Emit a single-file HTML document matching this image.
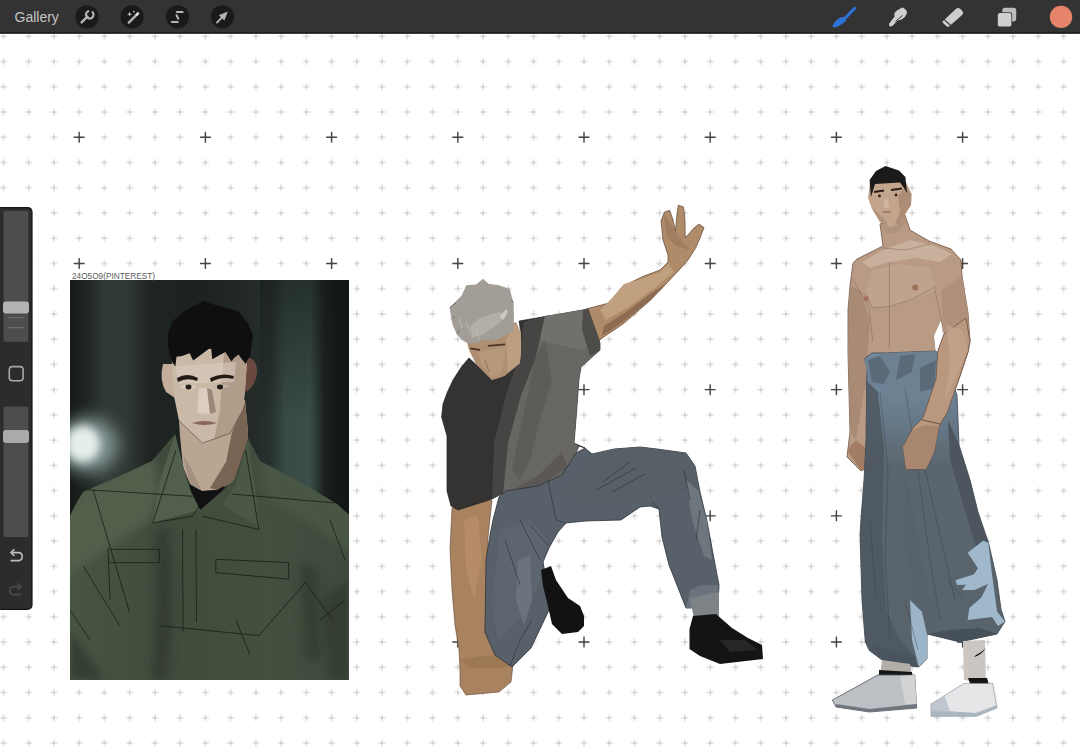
<!DOCTYPE html>
<html><head><meta charset="utf-8">
<style>
html,body{margin:0;padding:0;width:1080px;height:754px;overflow:hidden;background:#ffffff;font-family:"Liberation Sans",sans-serif;}
#root{position:relative;width:1080px;height:754px;overflow:hidden;}
svg{position:absolute;left:0;top:0;}
</style></head><body><div id="root">
<svg width="1080" height="754" viewBox="0 0 1080 754">
<defs>
<pattern id="g" patternUnits="userSpaceOnUse" x="-9.14" y="23.68" width="25.24" height="25.24">
<path d="M9.12 12.62h7M12.62 9.12v7" stroke="#cdcdcd" stroke-width="1"/><rect x="12.12" y="12.12" width="1" height="1" fill="#a8a8a8"/>
</pattern>
<filter id="b2" x="-50%" y="-50%" width="200%" height="200%"><feGaussianBlur stdDeviation="2"/></filter>
<filter id="b4" x="-50%" y="-50%" width="200%" height="200%"><feGaussianBlur stdDeviation="4"/></filter>
<filter id="b8" x="-50%" y="-50%" width="200%" height="200%"><feGaussianBlur stdDeviation="8"/></filter>
<filter id="b1" x="-50%" y="-50%" width="200%" height="200%"><feGaussianBlur stdDeviation="1"/></filter>
<clipPath id="photoclip"><rect x="70" y="280" width="279" height="400"/></clipPath>
</defs>
<rect x="0" y="33" width="1080" height="721" fill="url(#g)"/>
<path d="M73.70 137.26h11M79.20 131.76v11M199.90 137.26h11M205.40 131.76v11M326.10 137.26h11M331.60 131.76v11M452.30 137.26h11M457.80 131.76v11M578.50 137.26h11M584.00 131.76v11M704.70 137.26h11M710.20 131.76v11M830.90 137.26h11M836.40 131.76v11M957.10 137.26h11M962.60 131.76v11M73.70 263.46h11M79.20 257.96v11M199.90 263.46h11M205.40 257.96v11M326.10 263.46h11M331.60 257.96v11M452.30 263.46h11M457.80 257.96v11M578.50 263.46h11M584.00 257.96v11M704.70 263.46h11M710.20 257.96v11M830.90 263.46h11M836.40 257.96v11M957.10 263.46h11M962.60 257.96v11M73.70 389.66h11M79.20 384.16v11M199.90 389.66h11M205.40 384.16v11M326.10 389.66h11M331.60 384.16v11M452.30 389.66h11M457.80 384.16v11M578.50 389.66h11M584.00 384.16v11M704.70 389.66h11M710.20 384.16v11M830.90 389.66h11M836.40 384.16v11M957.10 389.66h11M962.60 384.16v11M73.70 515.86h11M79.20 510.36v11M199.90 515.86h11M205.40 510.36v11M326.10 515.86h11M331.60 510.36v11M452.30 515.86h11M457.80 510.36v11M578.50 515.86h11M584.00 510.36v11M704.70 515.86h11M710.20 510.36v11M830.90 515.86h11M836.40 510.36v11M957.10 515.86h11M962.60 510.36v11M73.70 642.06h11M79.20 636.56v11M199.90 642.06h11M205.40 636.56v11M326.10 642.06h11M331.60 636.56v11M452.30 642.06h11M457.80 636.56v11M578.50 642.06h11M584.00 636.56v11M704.70 642.06h11M710.20 636.56v11M830.90 642.06h11M836.40 636.56v11M957.10 642.06h11M962.60 636.56v11" stroke="#474747" stroke-width="1.4"/>
<g clip-path="url(#photoclip)">
<defs>
<linearGradient id="bgh" gradientUnits="userSpaceOnUse" x1="70" y1="0" x2="349" y2="0">
<stop offset="0" stop-color="#141917"/><stop offset="0.06" stop-color="#1f2624"/><stop offset="0.12" stop-color="#313936"/><stop offset="0.2" stop-color="#313936"/><stop offset="0.28" stop-color="#1f2523"/><stop offset="0.45" stop-color="#1c2220"/><stop offset="0.64" stop-color="#222927"/><stop offset="0.72" stop-color="#283130"/><stop offset="0.77" stop-color="#384a45"/><stop offset="0.86" stop-color="#3b4e49"/><stop offset="0.91" stop-color="#1d2321"/><stop offset="0.95" stop-color="#141817"/><stop offset="1" stop-color="#131716"/>
</linearGradient>
<linearGradient id="bgv" x1="0" y1="0" x2="0" y2="1"><stop offset="0" stop-color="#141917" stop-opacity="0.55"/><stop offset="0.35" stop-color="#141917" stop-opacity="0"/></linearGradient>
<linearGradient id="jk" x1="0" y1="0" x2="1" y2="0"><stop offset="0" stop-color="#495544"/><stop offset="0.35" stop-color="#404b3c"/><stop offset="0.7" stop-color="#434f3f"/><stop offset="1" stop-color="#3f4a3c"/></linearGradient>
</defs>
<rect x="70" y="280" width="279" height="400" fill="url(#bgh)"/>
<rect x="260" y="280" width="70" height="400" fill="url(#bgv)"/>
<ellipse cx="88" cy="445" rx="30" ry="28" fill="#7f928f" filter="url(#b8)"/>
<ellipse cx="83" cy="444" rx="17" ry="18" fill="#e6eeed" filter="url(#b4)"/>
<!-- neck -->
<path d="M179 420L245 400L248 432L248 462L234 482L217 490L202 491L190 484L183 467L180 436Z" fill="#b8a592"/>
<path d="M232 432L245 402L248 432L248 462L234 482L217 490L210 488L226 462Z" fill="#7a6454"/>
<path d="M183 455L192 470L202 491L190 484Z" fill="#9f8b79" opacity="0.8"/>
<!-- ears -->
<path d="M163 364Q159 380 166 392L175 398L174 364Z" fill="#c4ad9a"/>
<path d="M245 357Q258 358 257 373Q255 388 244 393Z" fill="#6a4a3e"/>
<!-- face -->
<path d="M171 350L248 348L245 390L243 410L230 433L202.5 443L179 420.7L174 396Z" fill="#cbb9a7"/>
<path d="M224 352L248 348L245 390L243 410L230 433L214 440L220 410Z" fill="#ad9784" opacity="0.85"/>
<path d="M176 366L236 362L234 382L178 384Z" fill="#d8ccbf" opacity="0.6"/>
<path d="M199 388L207 388L210 414L197 413Z" fill="#ded3c7" opacity="0.8"/>
<path d="M207 388L212 390L216 412L210 414Z" fill="#8f7b6a" opacity="0.8"/>
<path d="M179 420.7L202.5 443L230 433.4L245 405.8" stroke="#3a2e28" stroke-width="0.8" fill="none" opacity="0.6"/>
<!-- brows eyes lips -->
<path d="M177 378Q187 372 198 378L197 381Q187 377 178 382Z" fill="#231a16"/>
<path d="M210 378Q222 372 234 376L233 379Q222 376 211 382Z" fill="#231a16"/>
<path d="M180 387Q188 382 197 387Q188 391 180 387Z" fill="#d9d0c8"/><ellipse cx="188.5" cy="387" rx="3" ry="2.4" fill="#241a16"/>
<path d="M211 387Q220 382 230 386Q220 391 211 387Z" fill="#bfb4aa"/><ellipse cx="220" cy="387" rx="3" ry="2.4" fill="#241a16"/>
<path d="M192 423Q204 419 217 423Q204 427 192 423Z" fill="#8a6559"/>
<!-- hair -->
<path d="M175.3 366.4L171.7 361.6L168.1 347.3L168.1 333L172.9 321L182.4 312.7L194.4 305.5L203.9 300.7L212 304L221.8 306.7L238.5 311.5L248 323.4L252.9 335.3L250.5 354.4L245.7 364L241 358L238.5 354.4L234 358L231.4 361.6L225.4 352L218 356L212.3 359.2L211 347.3L202 354L193.2 360.4L189.6 353.2L182 356L176.5 356.8Z" fill="#0f0f0f"/>
<!-- undershirt -->
<path d="M190 486L202 491L217 490L224 486L220 506L200 510L191 504Z" fill="#111"/>
<!-- jacket -->
<clipPath id="jkclip"><path d="M70 516L76 504L83 492L120 476L152 461L175 434L184 470L191 492L200 510L221 492L234 480L248 438L260 461L300 482L337 504L349 515L349 680L70 680Z"/></clipPath>
<path d="M70 516L76 504L83 492L120 476L152 461L175 434L184 470L191 492L200 510L221 492L234 480L248 438L260 461L300 482L337 504L349 515L349 680L70 680Z" fill="url(#jk)"/>
<g clip-path="url(#jkclip)"><path d="M60 516L76 500L83 488L120 470L152 455L160 490L150 520L120 540L90 560L60 580Z" fill="#525f4c" filter="url(#b4)"/>
<path d="M260 455L300 476L337 498L360 510L360 560L320 530L268 500Z" fill="#4a5645" filter="url(#b4)"/></g>
<path d="M175 434L184 470L191 492L200 510L152 523L160 480Z" fill="#525f4c"/>
<path d="M248 438L260 527L222 505L236 484Z" fill="#4b5845"/>
<path d="M155 530L170 530L172 620L168 680L152 680L156 600Z" fill="#353e31" filter="url(#b4)"/>
<path d="M300 560L318 570L322 660L305 660Z" fill="#363f32" filter="url(#b4)"/>
<path d="M70 630L105 680L70 680Z" fill="#343d30" filter="url(#b4)"/>
<path d="M320 600L349 580L349 680L330 680Z" fill="#353e31" filter="url(#b4)"/>
<g stroke="#172015" stroke-width="0.9" fill="none" opacity="0.9">
<path d="M176 450L152.8 522.9L192.6 516.2L199 506"/>
<path d="M245.6 450L258.9 529.5L202.5 516.2"/>
<path d="M86.5 489.7L192.6 496.3M232 494L335 503"/>
<path d="M182.6 529.5L183 632M195.9 529.5L196.5 622"/>
<path d="M109.7 549.4L159.4 549.4L159.4 562.6L109.7 562.6M108 548L110 600"/>
<path d="M215.8 559.3L288.7 562.6L288.7 579.2L215.8 572.6Z"/>
<path d="M159.4 625.6L258.9 635.6L305.3 582.5"/>
<path d="M83.2 566L119.7 625.6M93.1 489.7L129.6 612.4M236 620L250 655M305.3 582.5L331.8 619M320 620L345 600"/>
<path d="M70 610L90 640M330 520L345 560"/>
</g>
</g>
<text x="72" y="278.6" font-family="Liberation Sans" font-size="9.5" fill="#5a5a5a" textLength="83" lengthAdjust="spacingAndGlyphs">24O5O9(PINTEREST)</text>

<!-- crouching figure -->
<!-- raised arm -->
<path d="M586 309L609 303L623 286L644 276L660 270L668 262L668 255L663 240L661 221L664.5 212L669.7 210.3L673 220L675.5 231L677 214L678.3 205.2L683.4 206.9L685 220L685.2 237.9L694 228L699 224L704 227.6L700 238L695.5 248.3L688 260L681.7 267.2L666 284L650.7 300L623 324L602.4 337.9L592 346L580 330Z" fill="#af8b6a" stroke="#5e4532" stroke-width="0.7"/>
<path d="M600 310L613 297L624 284L644 278L660 272L668 264L674 272L652 290L630 306L606 320Z" fill="#c0a07f"/>
<path d="M602 336L623 322L650 300L666 284L650 294L626 312L604 326Z" fill="#8d6b50"/>
<path d="M664 214L672 226L680 238L690 250L676 246L666 236Z" fill="#97765a" opacity="0.6"/>
<!-- left hanging arm -->
<path d="M452 508L450 549L452 590L455 625L459 650L460 670L460 686L466 695L499 692L511 682L513 665L495 655L485 632L487 570L488 537L492 500Z" fill="#a98260" stroke="#5e4532" stroke-width="0.6"/>
<path d="M464 520L478 515L482 560L474 600L466 570Z" fill="#b98f6a" opacity="0.8"/>
<path d="M460 660L480 656L495 655L513 665L500 668L470 668Z" fill="#96714f" opacity="0.6"/>
<!-- shirt -->
<path d="M469 358L462 366L453 380L447 393L443 404L441.6 417L447 436L447 491L451 506L458 510L492 499L506 491L538 486L562 475L576 453L579 446L585 448L574 443L576 419L579 379L581 367L600 350L600 343L588 309L560 314L519 321L521 333L521 353L515 364L502 377L492 380L480 368Z" fill="#343331" stroke="#222" stroke-width="0.7"/>
<path d="M524 322L545 316L535 360L521 395L508 443L503 494L492 499L494 443L506 395L518 360Z" fill="#474543"/>
<path d="M545 316L560 314L588 309L600 343L600 350L581 367L579 379L576 419L574 443L579 446L576 453L562 475L538 486L503 494L508 443L521 395L535 360Z" fill="#686663"/>
<path d="M545 316L560 314L588 309L596 335L584 350L560 345L540 340Z" fill="#72706d"/>
<path d="M583 310L588 309L600 343L600 350L590 356L582 330Z" fill="#4e4c49"/>
<path d="M535 360L545 340L552 380L540 420L530 460L520 480L512 470L520 430Z" fill="#5a5855" opacity="0.7"/>
<path d="M510 492L540 474L562 452L568 468L538 486Z" fill="#565451" opacity="0.8"/>
<!-- head -->
<path d="M466 338L469 350L476 364L491.8 380.1L504.5 376.1L519.7 363.4L521 353L521 333L516 322L505 328L490 332Z" fill="#ae8f72"/>
<path d="M478 352L494 349L506 346L502 372L492 378L482 366Z" fill="#b89a7c" opacity="0.8"/>
<path d="M506 340L516 322L521 333L521 353L519.7 363.4L508 372Z" fill="#bea083" opacity="0.9"/>
<path d="M470.3 348.3L479.9 350M487.8 345.9L505.3 344.3" stroke="#3e2618" stroke-width="1.8" opacity="0.85"/><path d="M485 360L489 372" stroke="#6e5038" stroke-width="0.8" opacity="0.6"/>
<path d="M483 278.7L489 284L498 285L510 289L511 294L513.6 302.8L514 318L513.6 330.7L508 334L500 338L492 341L484 340L476 343L468.2 343.6L462 340L457 334.4L453 326L451.5 319.5L449.6 307.5L461.7 295.4L466.3 285.2L476 284.5Z" fill="#a29d96"/>
<path d="M470 326L480 318L492 314L500 312L506 316L498 324L484 334L472 338Z" fill="#b9b5af" opacity="0.7"/>
<path d="M500 316L506 309L508 312L503 320Z" fill="#d6d3cf" opacity="0.8"/>
<path d="M466 322L470 332M476 330L480 340M459 318L462 328" stroke="#c7c3be" stroke-width="1" opacity="0.7"/>
<path d="M449.6 307.5L456 303M451.5 319.5L455 316M457 334.4L459 330M513.6 302.8L511 300" stroke="#4a4744" stroke-width="0.8" opacity="0.7"/>
<!-- pants -->
<path d="M499 497L506 491L538 486L562 475L576 453L585 448L592 454L614 449L640 447L657 449L686 453L695 466L700 492L707 521L714 559L719 585L718 604L712 608L686 608L669 565L662 537L659 509L650 506L640 507L621 520L585 521L566 523L558 532L549 548L543 562L548 590L550 608L531 648L512 667L495 655L485 632L486 560L490 535L493 520Z" fill="#58616a" stroke="#2c3238" stroke-width="0.8"/>
<path d="M592 454L614 449L640 447L657 449L686 453L695 466L698 485L680 492L650 500L610 505L580 500L560 495Z" fill="#585f67"/>
<path d="M686 480L698 490L707 521L712 560L704 556L692 520Z" fill="#6e767e"/><path d="M690 590L700 585L718 585L719 605L700 600Z" fill="#6a7179"/>
<path d="M500 530L530 520L548 540L540 580L520 620L498 640L492 600Z" fill="#5f6871" opacity="0.7"/><path d="M518 560L530 556L532 600L524 625L516 600Z" fill="#6f7880" opacity="0.8"/>
<path d="M690 590L718 585L718 604L712 608L686 608Z" fill="#6b747d"/>
<g stroke="#2e343a" stroke-width="0.8" fill="none" opacity="0.8">
<path d="M603 482L630 462M596 490L636 468M612 492L645 474"/>
<path d="M548 480L556 520L566 523M520 520L540 560M505 540L520 585M530 525L548 545"/>
<path d="M660 509L652 502M684 470L690 500M700 510L696 540"/>
<path d="M510 666L520 640L532 620"/>
</g>
<!-- boots -->
<path d="M541 570L551 566L556 580L568 598L580 606L584 616L584 626L578 632L562 634L552 624L547 602L543 586Z" fill="#121212"/>
<path d="M690 598L719 592L719 617L694 619Z" fill="#7e8388"/>
<path d="M693 616L716 614L732 628L748 638L762 645L763 659L720 664L700 656L689.5 649L689.5 629Z" fill="#141414"/><path d="M720 640L745 640L758 650L730 652Z" fill="#2a2a2a" opacity="0.8"/>

<!-- standing figure -->
<!-- body skin -->
<path d="M883 246L857 259L853 263L850 286L848 310L848 353L850 432L847 457L861 471L868 468L867 449L866 362L872 358L936 356L936 349L934 340L941 320L944 334L938 350L936 379L923 418L913 428L903 447L906 469L926 469L934 452L939 426L947 413L961 373L968 352L970 341L968 313L962 276L961 260L951 249L929 241L910 230L905 215L880 224Z" fill="#b99b85" stroke="#6e5444" stroke-width="0.8"/>
<path d="M934 336L941 320L944 334L938 350L936 356Z" fill="#ffffff"/>
<path d="M883 250L910 240L935 246L952 254L940 262L915 258L890 262L870 268L862 262Z" fill="#c9b09c"/>
<path d="M872 270L900 264L930 268L936 290L913 300L891 306L873 308L866 290Z" fill="#c0a38e"/>
<path d="M850 286L848 353L850 432L856 440L866 380L870 320L860 290Z" fill="#a98a75"/>
<path d="M847 450L861 471L868 468L867 449L856 440Z" fill="#a27d64"/>
<path d="M941 290L962 276L968 313L970 341L958 335L944 330Z" fill="#b0907a"/>
<path d="M880 224L889.5 228L899 224L905 215L907 222L898 232L886 234Z" fill="#ae917a" opacity="0.8"/>
<g stroke="#6e5444" stroke-width="0.7" fill="none" opacity="0.55">
<path d="M889.4 261.5L889.4 348.7M863.4 293L872.7 308L891.2 306L913.5 298.6L933.9 287.5M933.9 285.7L941.3 319L943.2 333.9M852.3 278.2L869 308L872.7 341.3M945 337.6L967.3 330.2M883 248L905 250L930 244"/>
</g>
<circle cx="915.3" cy="287.5" r="3" fill="#a0705a"/>
<circle cx="866.2" cy="298.6" r="2.5" fill="#a0705a"/>
<!-- head -->
<path d="M870 182L868 198L872 209L880 222L889.5 227.6L899 223.7L906.7 211.7L911 205L911.5 194L906 182Z" fill="#c3a48c"/>
<path d="M898 196L906 186L911.5 194L911 205L906.7 211.7L899 223.7L895 224L900 212Z" fill="#a8876f" opacity="0.8"/>
<path d="M872 208L880 222L889.5 227.6L884 218Z" fill="#a98a74" opacity="0.7"/>
<path d="M884 200L888 199L889 208L884 208Z" fill="#d6bca8" opacity="0.8"/>
<path d="M885.5 166L899 170.6L905.4 177L907 193L904 188L900 182.5L875 184L871 197L869.6 180L876 171Z" fill="#1a1a1a"/>
<path d="M874 192L884 190.5M891 190L902 188.5" stroke="#2a1c18" stroke-width="1.8"/>
<circle cx="879.5" cy="196" r="1.4" fill="#2a1c18"/><circle cx="896" cy="195" r="1.4" fill="#2a1c18"/>
<path d="M883 212h8" stroke="#7a5848" stroke-width="1"/>
<!-- pants -->
<defs><linearGradient id="pg" gradientUnits="userSpaceOnUse" x1="0" y1="352" x2="0" y2="670"><stop offset="0" stop-color="#7690a4"/><stop offset="0.2" stop-color="#687b8b"/><stop offset="0.36" stop-color="#5b656e"/><stop offset="1" stop-color="#59636c"/></linearGradient></defs>
<path d="M864 359L872 353L885 353L910 352L936 351L944 362L950 376L957 395L959 445L970 480L978 512L988.7 543.5L997 580L1001 609.3L1005 621.6L997 634L960 642L927 634L927 658.7L918.8 667L885.8 662.8L869.4 650.5L865.3 642L862 600L860 535L861 518.8L864 480L866 440L867 363Z" fill="url(#pg)" stroke="#3a424a" stroke-width="0.8"/>
<path d="M864 359L885 353L936 351L944 362L936 392L905 388L870 386Z" fill="#6d8193"/><path d="M868 360L880 356L890 372L884 384L872 382ZM900 356L915 354L912 372L896 380ZM920 368L936 360L934 388L920 392Z" fill="#566473" opacity="0.8"/>
<path d="M866 380L878 392L884 450L882 540L886 610L900 640L918 660L885.8 662.8L869.4 650.5L865.3 642L862 600L860 535L861 518.8L864 480L866 440Z" fill="#4e575f" opacity="0.85"/>
<path d="M905 470L915 520L925 580L935 625L927 634L915 600L905 540Z" fill="#56616b" opacity="0.8"/>
<path d="M948 420L959 445L970 480L978 512L988.7 543.5L976 548L962 500L950 460Z" fill="#4d565e"/>
<path d="M967.6 552.8L983 540.7L988.3 542.4L991.7 571.7L997 611.4L1005 621.6L998 626L992 617L967.6 620L969.3 608L981.4 597.6L988 584L974.5 590L962 590L974.5 573.4L978 568.3Z" fill="#a0b8cb"/>
<path d="M955.5 580.3L975 574L988 578L984 584L957 585Z" fill="#a0b8cb"/>
<path d="M910 600L922 612L927 634L927 658.7L918.8 667L912 640Z" fill="#9cb4c8"/>
<path d="M927 634L960 642L997 634L980 628L950 630Z" fill="#465059"/>
<path d="M872 646L912 656L918.8 667L885.8 662.8Z" fill="#4a545e"/>
<g stroke="#323a42" stroke-width="0.8" fill="none" opacity="0.45">
<path d="M880 392L888 470L885 560L890 640M905 388L918 470L930 560L940 620M925 470L955 600M870 520L876 600"/>
<path d="M948 580L962 598M905 600L918 650"/>
</g>
<!-- right forearm over pants -->
<path d="M970 341L968 352L961 373L947 413L939 426L934 452L926 469L906 469L903 447L913 428L923 418L936 379L938 350L944 334L966 318Z" fill="#b9987f" stroke="#6e5444" stroke-width="0.8"/>
<path d="M903 447L906 469L926 469L934 452L939 426L925 425L913 430Z" fill="#a98670"/>
<path d="M946 325L962 330L968 350L958 372L945 400L950 360Z" fill="#c4a58e" opacity="0.7"/>
<path d="M922 420L940 424" stroke="#6e5444" stroke-width="1"/>
<!-- socks shoes -->
<path d="M882 660L910 664L912 676L880 676Z" fill="#b3aea8"/>
<path d="M879 670L912 672L913 681L879 679Z" fill="#151515"/>
<path d="M877.6 675L914.7 675L916.7 708L869.4 712L836 707L832.3 700L858 686Z" fill="#bcc0c4" stroke="#50565c" stroke-width="0.8"/>
<path d="M836 704L869.4 709L916.7 704L916.7 708L869.4 712L836 707Z" fill="#6f767d"/>
<path d="M900 676L914.7 675L916.7 704L905 704Z" fill="#d0d2d4"/>
<path d="M963 641L985 640L986 683L964 680Z" fill="#cbc6c1"/>
<path d="M976 655Q982 652 986 648Q980 656 974 657Z" fill="#111"/>
<path d="M968 678L987 678L990 688L972 689Z" fill="#151515"/>
<path d="M964 683.4L992.8 683.4L997 708L976.4 716.3L931 716.3L931 704Z" fill="#e6e6e8" stroke="#8a949c" stroke-width="0.7"/>
<path d="M931 710L976 713L997 705L997 708L976.4 716.3L931 716.3Z" fill="#a9b6c0"/><path d="M931 704L945 696L950 712L931 712Z" fill="#b5bec6" opacity="0.8"/>

<rect x="0" y="0" width="1080" height="33.6" fill="#333333"/>
<rect x="0" y="32.4" width="1080" height="1.2" fill="#111111"/>
<text x="14.5" y="22" font-family="Liberation Sans" font-size="14" fill="#c4c4c4">Gallery</text>
<g fill="#1a1a1a"><circle cx="87" cy="16.8" r="11.6"/><circle cx="132.1" cy="16.8" r="11.6"/><circle cx="177.5" cy="16.8" r="11.6"/><circle cx="222.4" cy="16.8" r="11.6"/></g>
<g stroke="#b4b4b4" stroke-linecap="round" fill="none">
<path d="M81.6 22.4L87.4 16.6" stroke-width="2.4"/>
<path d="M92.6 12.2A3.8 3.8 0 1 1 88.2 11.2" stroke-width="2.2"/>
<path d="M128.8 22.6L136.8 14.6" stroke-width="2.4"/>
<path d="M176.8 12.1H182.6M176.6 15.2L178.3 18.7M171.8 22.1H177.8" stroke-width="2"/>
<path d="M217 22.5L225 14.4" stroke-width="1.8"/>
</g>
<path d="M227.8 11.6L218.8 15.2L224.4 20.6Z" fill="#b4b4b4"/>
<path d="M136.8 14.6L138 13.4" stroke="#e0e0e0" stroke-width="2.6" stroke-linecap="round"/>
<path d="M129.6 11.8L130.3 13.6L132.1 14.2L130.3 14.8L129.6 16.6L128.9 14.8L127.1 14.2L128.9 13.6Z" fill="#d0d0d0"/>
<circle cx="133.9" cy="11.6" r="0.9" fill="#c0c0c0"/>
<!-- right tools -->
<path d="M854.6 8.4L843.6 19.8" stroke="#2f72d8" stroke-width="3" stroke-linecap="round"/>
<path d="M844.6 17.6Q846.6 19.6 845 21.8Q840 26.4 834.2 27.4Q832 27.6 832.6 25.6Q835 20.4 840.6 17.6Q842.8 16.2 844.6 17.6Z" fill="#2f72d8"/>
<path d="M891 26.6Q888.4 26.4 889.2 23.6L894.6 16.6Q893.4 12.4 897 10.4L900.8 8.2Q902.4 6.6 904 8.2Q907.6 10.6 906.8 13.6Q905.8 17 902 19.2L897.4 20.8L892.6 25.8Q892 26.6 891 26.6Z" fill="#cfcfcf"/>
<path d="M895.6 21.4L902.6 15.4" stroke="#333333" stroke-width="1" fill="none"/>
<path d="M943.6 20.4L956.4 8.4Q958.6 7.2 960.4 9L962.6 11.2Q963.8 13 962.4 14.8L949.4 26.2Q947.8 27.4 946.2 26L942.6 22.4Q941.8 21.4 943.6 20.4Z" fill="#cdcdcd"/>
<path d="M944 19.4L951.2 26" stroke="#333333" stroke-width="1.2"/>
<rect x="1002.4" y="7.8" width="13.8" height="13.6" rx="2.4" fill="#bdbdbd"/>
<rect x="997" y="12.2" width="15.2" height="15.2" rx="2.6" fill="#333333"/>
<rect x="997.8" y="13" width="13.6" height="13.6" rx="2.2" fill="#cfcfcf"/>
<circle cx="1061" cy="16.9" r="11.2" fill="#e5836b"/>
<!-- sidebar -->
<path d="M-1 207.6H27.2Q32 207.6 32 212.4V604.6Q32 609.4 27.2 609.4H-1Z" fill="#2c2c2c" stroke="#161616" stroke-width="1.2"/>
<rect x="3.6" y="210.8" width="24.8" height="131" rx="1.5" fill="#4d4d4d"/>
<rect x="3.6" y="406.5" width="24.8" height="130.5" rx="1.5" fill="#4d4d4d"/>
<rect x="3" y="301.5" width="26" height="12" rx="3" fill="#b4b4b4"/>
<path d="M8 317.6H24M8 327.6H24" stroke="#6c6c6c" stroke-width="1.4"/>
<rect x="3" y="430" width="26" height="13" rx="3" fill="#aaaaaa"/>
<rect x="9.3" y="366.6" width="13.8" height="14.2" rx="3" fill="none" stroke="#a8a8a8" stroke-width="1.6"/>
<path d="M12.2 552.6H18.6Q22.2 552.6 22.2 556.6Q22.2 560.6 18.6 560.6H10.6" stroke="#bdbdbd" stroke-width="1.6" fill="none"/>
<path d="M14.4 549.4L11 552.6L14.4 555.8" stroke="#bdbdbd" stroke-width="1.6" fill="none"/>
<path d="M19.8 586.6H13.4Q9.8 586.6 9.8 590.6Q9.8 594.6 13.4 594.6H21.4" stroke="#4a4a4a" stroke-width="1.6" fill="none"/>
<path d="M17.6 583.4L21 586.6L17.6 589.8" stroke="#4a4a4a" stroke-width="1.6" fill="none"/>

</svg>
</div></body></html>
